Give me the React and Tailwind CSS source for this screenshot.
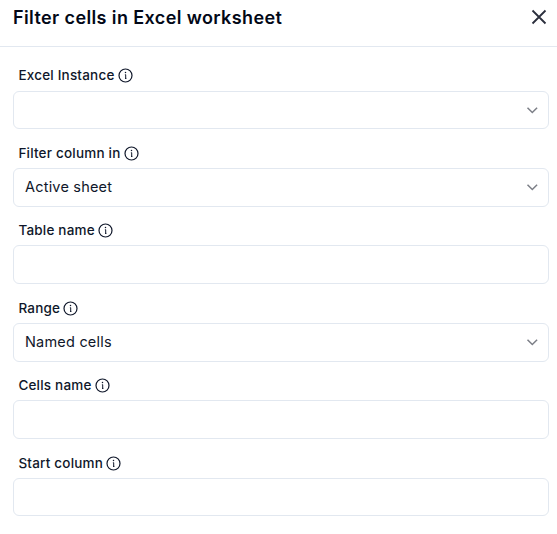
const fields = [
  { label: "Excel Instance", select: true, value: "" },
  { label: "Filter column in", select: true, value: "Active sheet" },
  { label: "Table name" },
  { label: "Range", select: true, value: "Named cells" },
  { label: "Cells name" },
  { label: "Start column" },
];

function InfoIcon() {
  return (
    <svg className="mt-px size-[15px] shrink-0" viewBox="0 0 15 15" fill="none" stroke="#0f172a" strokeWidth="1.2">
      <circle cx="7.5" cy="7.5" r="6.5" />
      <path d="M6.9 6.7h0.8v3.9M7 10.4h1.4" strokeWidth="1" />
      <circle cx="7.5" cy="4.6" r="0.75" fill="#0f172a" stroke="none" />
    </svg>
  );
}

function Field({ label, select, value }) {
  return (
    <div className="flex h-[77.43px] flex-col">
      <div className="mt-[0.95px] mb-[5.12px] flex h-[20px] shrink-0 items-center gap-[3.3px] pl-[5.4px]">
        <span className="text-[13.5px] leading-[18px] font-medium tracking-[0.2px] whitespace-nowrap">{label}</span>
        <InfoIcon />
      </div>
      <div className="flex h-[38.8px] shrink-0 items-center justify-between rounded-[6px] border border-[#e2e8f0] pr-[9.7px] pl-[11px]">
        <span className="text-[14.5px] leading-[20px] tracking-[0.2px]">{value}</span>
        {select && (
          <svg className="h-[12px] w-[12px]" viewBox="0 0 12 12" fill="none" stroke="#7c7f87" strokeWidth="1.5">
            <path d="M1.5 3.7L6.3 8.5l4.8-4.8" />
          </svg>
        )}
      </div>
    </div>
  );
}

export default function App() {
  return (
    <div className="h-[534px] w-[557px] overflow-hidden bg-white font-['Inter',sans-serif] text-[#0f172a]">
      <header className="flex h-[47px] items-start justify-between border-b border-[#e2e8f0] pr-[10px] pl-[13px]">
        <h1 className="pt-[6px] text-[18px] leading-[24px] font-semibold tracking-[0.39px] text-[#020817]">
          Filter cells in Excel worksheet
        </h1>
        <svg className="mt-[9px] size-[16px]" viewBox="0 0 16 16" fill="none" stroke="#2b2f3d" strokeWidth="1.8">
          <path d="M1.5 1.5l13 13M14.5 1.5l-13 13" />
        </svg>
      </header>
      <main className="flex flex-col pt-[17.5px] pr-[8px] pl-[13px]">
        {fields.map((f) => (
          <Field key={f.label} {...f} />
        ))}
      </main>
    </div>
  );
}
